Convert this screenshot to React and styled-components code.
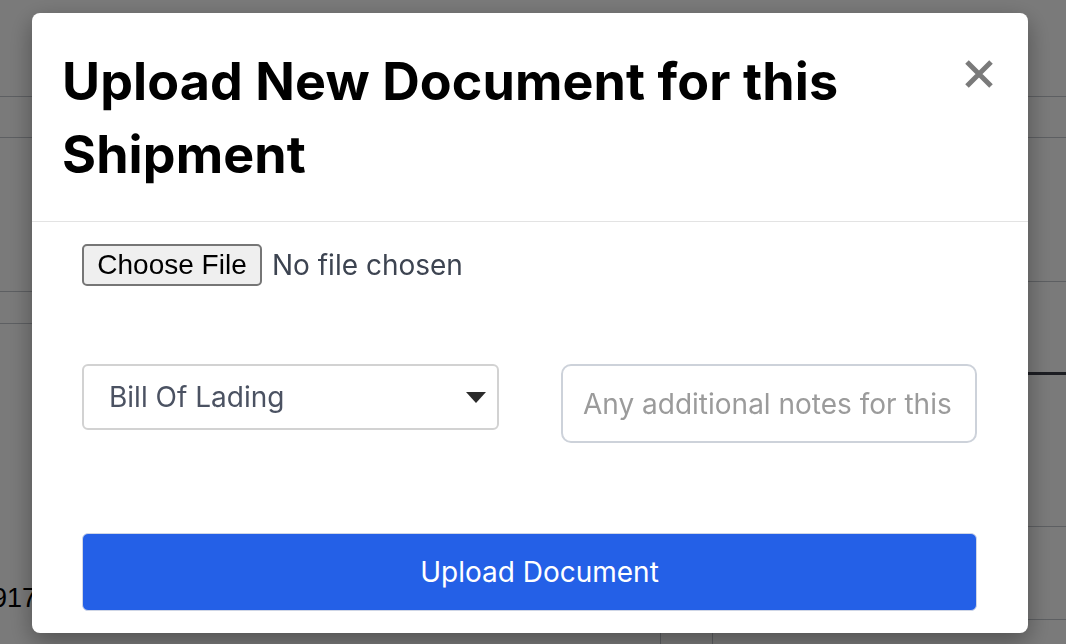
import React from 'react';
import styled, { createGlobalStyle } from 'styled-components';

const GlobalStyle = createGlobalStyle`
    * {
        box-sizing: border-box;
    }
    body {
        margin: 0;
        height: 644px;
        overflow: hidden;
        background: #ffffff;
        font-family: Inter, 'Noto Sans', sans-serif;
    }
`;

const leftRows = [
    { height: 97 },
    { height: 41 },
    { height: 154 },
    { height: 32 },
];

const rightRows = [
    { height: 97 },
    { height: 41 },
    { height: 144 },
    { height: 93, dark: true },
    { height: 152 },
    { height: 93 },
];

const UploadDocumentModal = () => {
    return (
        <>
            <GlobalStyle />
            <Page>
                <SidePane>
                    {leftRows.map((row, i) => (
                        <TableRow key={i} $height={row.height} />
                    ))}
                    <RowText>917</RowText>
                </SidePane>
                <CenterPane>
                    <FooterCells>
                        <Cell $width={621} />
                        <Cell $width={52} />
                    </FooterCells>
                </CenterPane>
                <SidePane>
                    {rightRows.map((row, i) => (
                        <TableRow key={i} $height={row.height} $dark={row.dark} />
                    ))}
                </SidePane>
            </Page>

            <Overlay>
                <Modal>
                    <Header>
                        <Title>Upload New Document for this Shipment</Title>
                        <CloseButton aria-label="Close">
                            <svg width="30" height="28" viewBox="0 0 30 28">
                                <path
                                    d="M3 2 L27 26 M27 2 L3 26"
                                    stroke="#7a7a7a"
                                    strokeWidth="5"
                                    strokeLinecap="butt"
                                />
                            </svg>
                        </CloseButton>
                    </Header>

                    <Body>
                        <FilePicker>
                            <HiddenInput type="file" />
                            <ChooseButton>Choose File</ChooseButton>
                            <FileName>No file chosen</FileName>
                        </FilePicker>

                        <FieldRow>
                            <SelectWrap>
                                <Select defaultValue="bol">
                                    <option value="bol">Bill Of Lading</option>
                                    <option value="invoice">Commercial Invoice</option>
                                    <option value="packing">Packing List</option>
                                </Select>
                                <Caret width="20" height="11" viewBox="0 0 20 11">
                                    <path d="M0 0 H20 L10 11 Z" fill="#2b2b2b" />
                                </Caret>
                            </SelectWrap>
                            <NotesInput placeholder="Any additional notes for this document" />
                        </FieldRow>

                        <UploadButton>Upload Document</UploadButton>
                    </Body>
                </Modal>
            </Overlay>
        </>
    );
};

// Styled Components

const Page = styled.div`
    display: grid;
    grid-template-columns: 40px 1fr 38px;
    height: 644px;
`;

const SidePane = styled.div`
    display: flex;
    flex-direction: column;
`;

const TableRow = styled.div`
    height: ${(p) => p.$height}px;
    flex-shrink: 0;
    border-bottom: ${(p) => (p.$dark ? '3px solid #3b3d48' : '1px solid #c2c6cc')};
`;

const RowText = styled.div`
    margin-top: auto;
    margin-bottom: 30px;
    margin-left: -8px;
    font-family: 'Liberation Sans', Arial, sans-serif;
    font-size: 27px;
    color: #000;
`;

const CenterPane = styled.div`
    display: flex;
    flex-direction: column;
    justify-content: flex-end;
`;

const FooterCells = styled.div`
    display: flex;
    height: 11px;
`;

const Cell = styled.div`
    width: ${(p) => p.$width}px;
    border-right: 1px solid #c2c6cc;
`;

const Overlay = styled.div`
    position: fixed;
    inset: 0;
    background: rgba(0, 0, 0, 0.52);
    display: flex;
    align-items: flex-start;
    padding: 13px 0 0 32px;
`;

const Modal = styled.div`
    width: 996px;
    height: 620px;
    background: #ffffff;
    border-radius: 8px;
    overflow: hidden;
    box-shadow: 0 8px 24px rgba(0, 0, 0, 0.35);
`;

const Header = styled.div`
    display: flex;
    justify-content: space-between;
    align-items: flex-start;
    padding: 32px 34px 30px 30px;
    border-bottom: 1px solid #e3e3e3;
`;

const Title = styled.h1`
    margin: 0;
    max-width: 860px;
    font-size: 52px;
    line-height: 73px;
    font-weight: 700;
    letter-spacing: 0.1px;
    color: #000;
`;

const CloseButton = styled.button`
    display: flex;
    margin-top: 15px;
    padding: 0;
    border: none;
    background: none;
    cursor: pointer;
`;

const Body = styled.div`
    display: flex;
    flex-direction: column;
    padding: 22px 51px 21px 50px;
`;

const FilePicker = styled.label`
    display: flex;
    align-items: center;
    gap: 10px;
    cursor: pointer;
`;

const HiddenInput = styled.input`
    display: none;
`;

const ChooseButton = styled.span`
    display: flex;
    align-items: center;
    justify-content: center;
    width: 180px;
    height: 42px;
    background: #efefef;
    border: 2px solid #767676;
    border-radius: 5px;
    font-family: 'Liberation Sans', Arial, sans-serif;
    font-size: 28px;
    color: #000;
`;

const FileName = styled.span`
    font-size: 28px;
    color: #3d4451;
`;

const FieldRow = styled.div`
    display: grid;
    grid-template-columns: 417px 1fr;
    column-gap: 62px;
    align-items: start;
    margin-top: 78px;
`;

const SelectWrap = styled.div`
    position: relative;
`;

const Select = styled.select`
    appearance: none;
    width: 100%;
    height: 66px;
    padding: 0 60px 0 25px;
    background: #ffffff;
    border: 2px solid #d2d2d2;
    border-radius: 6px;
    font-family: Inter, sans-serif;
    font-size: 28px;
    color: #4b5262;
    outline: none;
`;

const Caret = styled.svg`
    position: absolute;
    right: 13px;
    top: 28px;
    pointer-events: none;
`;

const NotesInput = styled.input`
    width: 100%;
    height: 79px;
    padding: 0 20px;
    border: 2px solid #cdd2da;
    border-radius: 10px;
    font-family: Inter, sans-serif;
    font-size: 28px;
    color: #333;
    outline: none;

    &::placeholder {
        color: #9b9b9b;
    }
`;

const UploadButton = styled.button`
    margin-top: 90px;
    width: 100%;
    height: 78px;
    padding: 0 0 0 20px;
    background: #2460e7;
    border: 1px solid #cfd6e6;
    border-radius: 6px;
    font-family: Inter, sans-serif;
    font-size: 28px;
    color: #ffffff;
    cursor: pointer;
`;

export default UploadDocumentModal;
